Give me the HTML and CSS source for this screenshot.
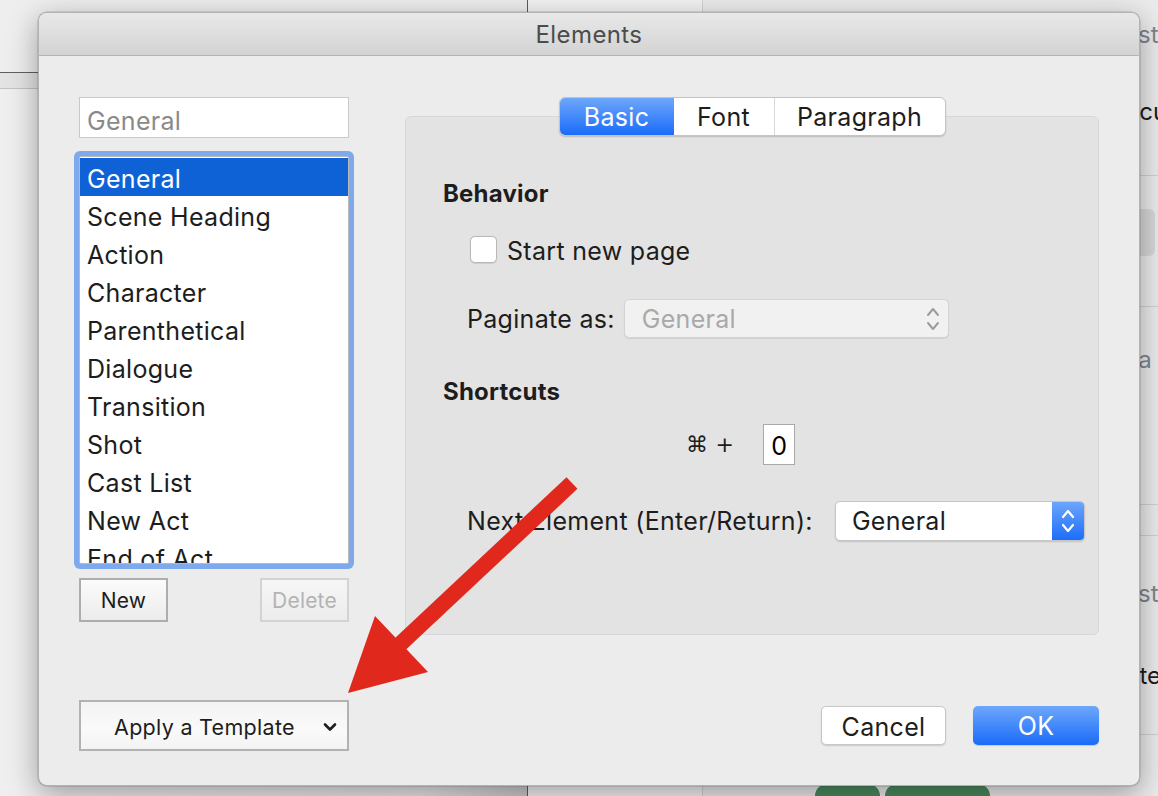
FILE: index.html
```html
<!DOCTYPE html>
<html>
<head>
<meta charset="utf-8">
<link rel="stylesheet" href="styles.css">
</head>
<body>
<div class="desk">
  <div class="bg-left">
    <div class="bg-toolbar"></div>
    <div class="bg-band"></div>
  </div>
  <div class="bg-mid"></div>
  <div class="bg-right">
    <div class="bg-row r1"><span class="muted">Last</span></div>
    <div class="bg-row r2"><span>Accu</span></div>
    <div class="bg-row r3"><div class="bg-box"></div></div>
    <div class="bg-row r4"><span class="muted">Via</span></div>
    <div class="bg-row r5"></div>
    <div class="bg-row r6"><span class="muted">Last</span></div>
    <div class="bg-row r7"><span>Note</span></div>
    <div class="bg-row r8">
      <div class="green g1"></div><div class="green g2"></div>
      <div class="bg-plus">+</div>
    </div>
  </div>

  <div class="dialog">
    <div class="titlebar">Elements</div>
    <div class="dialog-body">
      <div class="left-col">
        <div class="search">General</div>
        <div class="list">
          <div class="item selected">General</div>
          <div class="item">Scene Heading</div>
          <div class="item">Action</div>
          <div class="item">Character</div>
          <div class="item">Parenthetical</div>
          <div class="item">Dialogue</div>
          <div class="item">Transition</div>
          <div class="item">Shot</div>
          <div class="item">Cast List</div>
          <div class="item">New Act</div>
          <div class="item">End of Act</div>
        </div>
        <div class="list-buttons">
          <div class="sq-btn">New</div>
          <div class="sq-btn disabled">Delete</div>
        </div>
      </div>

      <div class="right-col">
        <div class="tabs">
          <div class="tab active t-basic">Basic</div>
          <div class="tab t-font">Font</div>
          <div class="tab t-para">Paragraph</div>
        </div>
        <div class="panel">
          <div class="heading h-behavior">Behavior</div>
          <div class="check-row">
            <div class="checkbox"></div>
            <span>Start new page</span>
          </div>
          <div class="field-row paginate">
            <span class="label">Paginate as:</span>
            <div class="popup disabled-popup">
              <span>General</span>
              <svg class="updown" width="14" height="26" viewBox="0 0 14 26"><path d="M2 9 L7 3 L12 9 M2 17 L7 23 L12 17" fill="none" stroke="#9c9c9c" stroke-width="2" stroke-linecap="round" stroke-linejoin="round"/></svg>
            </div>
          </div>
          <div class="heading h-shortcuts">Shortcuts</div>
          <div class="shortcut-row">
            <span class="cmd">⌘ +</span>
            <div class="key">0</div>
          </div>
          <div class="field-row next">
            <span class="label">Next Element (Enter/Return):</span>
            <div class="popup active-popup">
              <span>General</span>
              <div class="popup-arrows">
                <svg width="16" height="28" viewBox="0 0 16 28"><path d="M3 10 L8 4 L13 10 M3 18 L8 24 L13 18" fill="none" stroke="#ffffff" stroke-width="2.2" stroke-linecap="round" stroke-linejoin="round"/></svg>
              </div>
            </div>
          </div>
        </div>
      </div>

      <div class="template-btn">
        <span>Apply a Template</span>
        <svg width="14" height="10" viewBox="0 0 14 10"><path d="M2 2.5 L7 7.5 L12 2.5" fill="none" stroke="#1e1e1e" stroke-width="2.6" stroke-linecap="round" stroke-linejoin="round"/></svg>
      </div>
      <div class="footer-buttons">
        <div class="push-btn cancel">Cancel</div>
        <div class="push-btn ok">OK</div>
      </div>
    </div>
  </div>

  <svg class="annotation" width="1158" height="796" viewBox="0 0 1158 796">
    <line x1="572" y1="483" x2="396" y2="648" stroke="#e1281c" stroke-width="16"/>
    <polygon points="348,693 375,616 428,672" fill="#e1281c"/>
  </svg>
</div>
</body>
</html>
```

FILE: styles.css
```css
* { box-sizing: border-box; }

html, body {
  margin: 0;
  padding: 0;
}

body {
  font-family: Inter, "Liberation Sans", sans-serif;
  color: #1d1d1d;
  background: #ececec;
}

.desk {
  position: relative;
  width: 1158px;
  height: 796px;
  overflow: hidden;
  display: flex;
  background: #ebebeb;
}

/* background app */
.bg-left {
  flex: none;
  width: 528px;
  display: flex;
  flex-direction: column;
  background: linear-gradient(90deg, #efefef 0%, #e6e6e6 80%, #c9c9c9 100%);
  border-right: 1px solid #5c5c5c;
}
.bg-toolbar {
  height: 73px;
  border-bottom: 1px solid #5f5f5f;
  background: #eeeeee;
}
.bg-band {
  height: 16px;
  background: #e3e3e3;
  border-bottom: 1px solid #c3c3c3;
}
.bg-mid {
  flex: none;
  width: 175px;
  background: #f3f3f3;
  border-right: 1px solid #d3d3d3;
}
.bg-right {
  flex: 1;
  min-width: 0;
  display: flex;
  flex-direction: column;
  background: #ebebeb;
  font-size: 24px;
}
.bg-row {
  flex: none;
  display: flex;
  align-items: center;
  border-bottom: 1px solid #d0d0d0;
  white-space: nowrap;
}
.bg-row span { color: #1d1d1d; }
.bg-row span.muted { color: #7d8590; }
.r1 { height: 72px; border-bottom: none; align-items: flex-start; padding-top: 20px; padding-left: 408px; }
.r2 { height: 104px; align-items: flex-start; padding-top: 25px; padding-left: 406px; }
.r3 { height: 131px; align-items: flex-start; padding-top: 33px; padding-left: 422px; }
.bg-box {
  width: 30px;
  height: 47px;
  background: #d7d7d7;
  border-radius: 6px;
}
.r4 { height: 198px; align-items: flex-start; padding-top: 38px; padding-left: 413px; }
.r5 { height: 31px; }
.r6 { height: 80px; border-bottom: none; padding-left: 408px; padding-top: 34px; }
.r7 { height: 119px; padding-left: 404px; }
.r8 {
  flex: 1;
  border-bottom: none;
  padding-left: 112px;
  align-items: flex-end;
  gap: 5px;
}
.green {
  flex: none;
  height: 12px;
  background: #4a8a5e;
  border-radius: 20px 20px 0 0;
}
.g1 { width: 65px; }
.g2 { width: 105px; }
.bg-plus {
  flex: none;
  margin-left: 240px;
  width: 40px;
  height: 28px;
  background: #d9d9d9;
  border-radius: 6px 6px 0 0;
  font-size: 30px;
  font-weight: 700;
  line-height: 48px;
  text-align: center;
  overflow: hidden;
}

/* dialog */
.dialog {
  position: absolute;
  left: 38px;
  top: 12px;
  width: 1102px;
  height: 774px;
  background: #ececec;
  border: 1px solid #b3b3b3;
  border-radius: 9px;
  box-shadow: 0 8px 30px rgba(0,0,0,0.35), 0 0 0 0.5px rgba(0,0,0,0.2);
  overflow: hidden;
  display: flex;
  flex-direction: column;
}
.titlebar {
  height: 43px;
  flex: none;
  background: linear-gradient(#e8e8e8, #d3d3d3);
  border-bottom: 1px solid #b4b4b4;
  text-align: center;
  font-size: 24px;
  letter-spacing: 0.4px;
  line-height: 44px;
  color: #4c4c4c;
}
.dialog-body {
  flex: 1;
  display: grid;
  grid-template-columns: 270px 694px;
  grid-template-rows: 538px 51px;
  column-gap: 56px;
  row-gap: 65px;
  padding: 41px 0 0 40px;
  align-items: start;
  letter-spacing: 0.3px;
}

/* left column */
.left-col {
  display: flex;
  flex-direction: column;
}
.search {
  height: 41px;
  background: #ffffff;
  border: 1px solid #c9c9c9;
  color: #8a8a8a;
  font-size: 25px;
  line-height: 46px;
  padding-left: 7px;
}
.list {
  margin-top: 18px;
  height: 408px;
  background: #ffffff;
  border: 1px solid #b9b9b9;
  box-shadow: 0 0 0 5px #7ea9ec;
  border-radius: 2px;
  overflow: hidden;
  padding-top: 1px;
}
.item {
  height: 38px;
  line-height: 43px;
  font-size: 25px;
  padding-left: 7px;
  color: #1d1d1d;
  white-space: nowrap;
}
.item.selected {
  background: #0f62d6;
  color: #ffffff;
}
.list-buttons {
  margin-top: 14px;
  display: flex;
  justify-content: space-between;
}
.sq-btn {
  width: 89px;
  height: 44px;
  border: 2px solid #adadad;
  background: linear-gradient(#fbfbfb, #ececec);
  font-size: 21px;
  line-height: 42px;
  text-align: center;
  color: #1d1d1d;
  letter-spacing: 0.2px;
}
.sq-btn.disabled {
  border-color: #d3d3d3;
  color: #b3b3b3;
  background: linear-gradient(#f6f6f6, #ececec);
}

/* right column */
.right-col {
  display: flex;
  flex-direction: column;
  align-items: center;
}
.tabs {
  position: relative;
  z-index: 1;
  display: flex;
  height: 39px;
  background: #ffffff;
  border: 1px solid #c5c5c5;
  border-radius: 6px;
  box-shadow: 0 1px 1.5px rgba(0,0,0,0.18);
  overflow: hidden;
  font-size: 25px;
}
.tab {
  text-align: center;
  line-height: 39px;
  color: #1d1d1d;
}
.t-basic { width: 114px; }
.t-font { width: 101px; border-right: 1px solid #d9d9d9; }
.t-para { width: 170px; }
.tab.active {
  background: linear-gradient(#6ea7fb, #1a6cf9);
  color: #ffffff;
}
.panel {
  width: 694px;
  height: 519px;
  margin-top: -20px;
  background: #e3e3e3;
  border: 1px solid #d7d7d7;
  border-radius: 6px;
  padding: 62px 0 0 37px;
  display: flex;
  flex-direction: column;
  font-size: 25px;
}
.heading {
  font-weight: 700;
  height: 30px;
  line-height: 30px;
  font-size: 24px;
  letter-spacing: 0.2px;
  color: #1d1d1d;
}
.check-row {
  margin-top: 27px;
  height: 27px;
  display: flex;
  align-items: center;
  gap: 10px;
  padding-left: 27px;
}
.check-row span { padding-top: 3px; }
.checkbox {
  flex: none;
  width: 27px;
  height: 27px;
  background: #ffffff;
  border: 1px solid #b8b8b8;
  border-radius: 5px;
  box-shadow: 0 0.5px 1px rgba(0,0,0,0.1);
}
.field-row {
  display: flex;
  align-items: center;
  padding-left: 24px;
  white-space: nowrap;
}
.paginate { margin-top: 36px; gap: 9px; }
.next { margin-top: 36px; gap: 22px; }
.popup {
  flex: none;
  display: flex;
  align-items: center;
  justify-content: space-between;
  border-radius: 5px;
}
.disabled-popup {
  width: 325px;
  height: 39px;
  background: #f1f1f1;
  border: 1px solid #d3d3d3;
  box-shadow: 0 1px 1px rgba(0,0,0,0.08);
  color: #a9a9a9;
  padding: 0 8px 0 17px;
}
.active-popup {
  width: 250px;
  height: 40px;
  background: #ffffff;
  border: 1px solid #c6c6c6;
  box-shadow: 0 1px 1.5px rgba(0,0,0,0.15);
  color: #1d1d1d;
  padding-left: 16px;
  overflow: hidden;
}
.popup-arrows {
  width: 33px;
  height: 40px;
  margin-right: -1px;
  background: linear-gradient(#6ea7fb, #1a6cf9);
  display: flex;
  align-items: center;
  justify-content: center;
}
.h-shortcuts { margin-top: 39px; }
.shortcut-row {
  margin-top: 17px;
  height: 41px;
  display: flex;
  align-items: center;
  padding-left: 243px;
  gap: 29px;
}
.cmd {
  font-family: "DejaVu Sans", Inter, sans-serif;
  font-size: 22px;
  white-space: nowrap;
}
.key {
  width: 32px;
  height: 41px;
  background: #ffffff;
  border: 1px solid #a9a9a9;
  text-align: center;
  line-height: 42px;
  font-size: 25px;
  color: #000;
}

/* footer */
.template-btn {
  width: 270px;
  height: 51px;
  border: 2px solid #b2b2b2;
  background: linear-gradient(#f3f3f3, #fafafa 60%, #f3f3f3);
  display: flex;
  align-items: center;
  justify-content: space-between;
  padding: 2px 10px 0 33px;
  font-size: 21.5px;
  color: #1d1d1d;
}
.footer-buttons {
  display: flex;
  justify-content: flex-end;
  gap: 27px;
  align-self: center;
}
.push-btn {
  height: 39px;
  width: 126px;
  border-radius: 5px;
  text-align: center;
  font-size: 25px;
  line-height: 40px;
}
.cancel {
  width: 125px;
  background: #ffffff;
  border: 1px solid #c7c7c7;
  box-shadow: 0 1px 1.5px rgba(0,0,0,0.15);
  color: #1d1d1d;
}
.ok {
  background: linear-gradient(#6ea7fb, #1a6cf9);
  color: #ffffff;
  box-shadow: 0 1px 1px rgba(0,0,0,0.15);
}

.annotation {
  position: absolute;
  left: 0;
  top: 0;
  pointer-events: none;
}
```
